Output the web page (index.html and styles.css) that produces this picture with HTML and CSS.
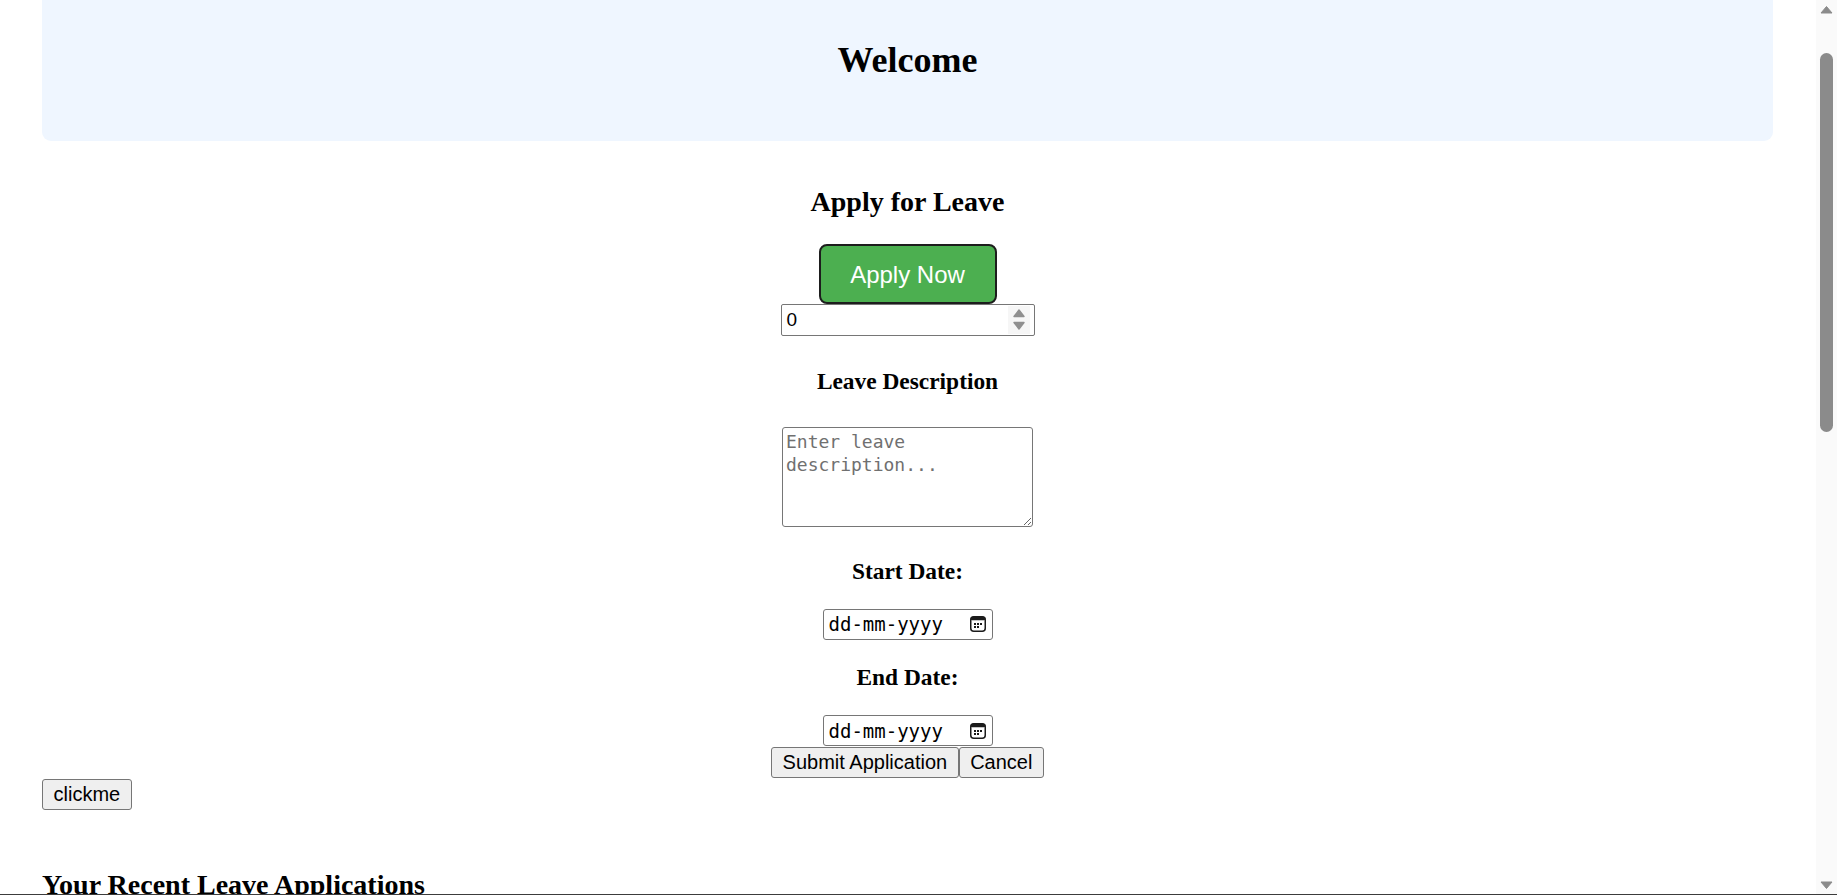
FILE: index.html
```html
<!DOCTYPE html>
<html lang="en">
<head>
<meta charset="utf-8">
<title>Leave Portal</title>
<link rel="stylesheet" href="styles.css">
</head>
<body>
<div class="page">
  <main class="content">
    <header class="welcome">
      <h1 class="welcome-title">Welcome</h1>
    </header>

    <section class="apply">
      <h2 class="apply-title">Apply for Leave</h2>
      <button class="apply-btn" type="button">Apply Now</button>
      <div class="number-field">
        <span class="number-value">0</span>
        <span class="spinner">
          <svg width="22" height="28" viewBox="0 0 22 28">
            <polygon points="6,10.5 11,4 16,10.5" fill="#8f8f8f" stroke="#8f8f8f" stroke-width="1.4" stroke-linejoin="round"/>
            <polygon points="6,16.5 11,23 16,16.5" fill="#8f8f8f" stroke="#8f8f8f" stroke-width="1.4" stroke-linejoin="round"/>
          </svg>
        </span>
      </div>

      <h3 class="field-label label-desc">Leave Description</h3>
      <textarea class="desc" placeholder="Enter leave description..."></textarea>

      <h3 class="field-label label-start">Start Date:</h3>
      <div class="date-field">
        <span class="date-text">dd-mm-yyyy</span>
        <svg class="cal" width="18" height="18" viewBox="0 0 18 18">
          <rect x="1.75" y="1.75" width="14.5" height="14.5" rx="3" fill="none" stroke="#1b1b1b" stroke-width="1.5"/>
          <rect x="1.75" y="1.75" width="14.5" height="3.6" rx="1.5" fill="#1b1b1b"/>
          <rect x="5" y="8" width="2" height="2" fill="#1b1b1b"/>
          <rect x="8" y="8" width="2" height="2" fill="#1b1b1b"/>
          <rect x="11" y="8" width="2" height="2" fill="#1b1b1b"/>
          <rect x="5" y="11" width="2" height="2" fill="#1b1b1b"/>
          <rect x="8" y="11" width="2" height="2" fill="#1b1b1b"/>
        </svg>
      </div>

      <h3 class="field-label label-end">End Date:</h3>
      <div class="date-field">
        <span class="date-text">dd-mm-yyyy</span>
        <svg class="cal" width="18" height="18" viewBox="0 0 18 18">
          <rect x="1.75" y="1.75" width="14.5" height="14.5" rx="3" fill="none" stroke="#1b1b1b" stroke-width="1.5"/>
          <rect x="1.75" y="1.75" width="14.5" height="3.6" rx="1.5" fill="#1b1b1b"/>
          <rect x="5" y="8" width="2" height="2" fill="#1b1b1b"/>
          <rect x="8" y="8" width="2" height="2" fill="#1b1b1b"/>
          <rect x="11" y="8" width="2" height="2" fill="#1b1b1b"/>
          <rect x="5" y="11" width="2" height="2" fill="#1b1b1b"/>
          <rect x="8" y="11" width="2" height="2" fill="#1b1b1b"/>
        </svg>
      </div>

      <div class="actions">
        <button class="btn" type="button">Submit Application</button><button class="btn" type="button">Cancel</button>
      </div>
    </section>

    <button class="btn clickme" type="button">clickme</button>

    <h2 class="recent-title">Your Recent Leave Applications</h2>
  </main>

  <div class="scrollbar">
    <div class="sb-arrow">
      <svg width="15" height="21" viewBox="0 0 15 21"><polygon points="2,13 7.5,6.5 13,13" fill="#8b8b8b" stroke="#8b8b8b" stroke-width="1" stroke-linejoin="round"/></svg>
    </div>
    <div class="sb-track"><div class="sb-thumb"></div></div>
    <div class="sb-arrow">
      <svg width="15" height="21" viewBox="0 0 15 21"><polygon points="2,8 7.5,14.5 13,8" fill="#8b8b8b" stroke="#8b8b8b" stroke-width="1" stroke-linejoin="round"/></svg>
    </div>
  </div>
</div>
<div class="bottom-line"></div>
</body>
</html>
```

FILE: styles.css
```css
html, body {
  margin: 0;
  padding: 0;
  height: 100%;
  overflow: hidden;
}

body {
  font-family: "Liberation Serif", "Times New Roman", serif;
  color: #000;
  background: #fff;
}

.page {
  display: flex;
  height: 895px;
}

.content {
  flex: 1;
  min-width: 0;
  padding: 0 43px 0 42px;
}

/* Header */
.welcome {
  height: 141px;
  box-sizing: border-box;
  padding-top: 40px;
  background: #eff6ff;
  border-radius: 0 0 9px 9px;
  text-align: center;
}

.welcome-title {
  margin: 0;
  font-size: 36px;
  line-height: 41px;
  font-weight: bold;
}

/* Form column */
.apply {
  display: flex;
  flex-direction: column;
  align-items: center;
}

.apply-title {
  margin: 45px 0 0;
  font-size: 28px;
  line-height: 32px;
}

.apply-btn {
  margin-top: 26px;
  box-sizing: border-box;
  width: 178px;
  height: 60px;
  padding: 2px 0 0;
  font-family: "Liberation Sans", Arial, sans-serif;
  font-size: 24px;
  color: #fff;
  background: #4caf50;
  border: 2px solid #1d1d1d;
  border-radius: 8px;
}

.number-field {
  box-sizing: border-box;
  width: 254px;
  height: 32px;
  display: flex;
  align-items: center;
  justify-content: space-between;
  padding: 0 4px 0 5px;
  border: 1px solid #767676;
  border-radius: 2px;
  font-family: "Liberation Sans", Arial, sans-serif;
  font-size: 19px;
}

.spinner {
  display: flex;
  background: #f6f6f6;
}

.spinner svg {
  display: block;
}

.field-label {
  margin: 0;
  font-size: 23.4px;
  line-height: 27px;
  font-weight: bold;
}

.label-desc {
  margin-top: 31.5px;
}

.desc {
  margin-top: 32.5px;
  box-sizing: border-box;
  width: 251px;
  height: 100px;
  padding: 2px 3px;
  border: 1px solid #767676;
  border-radius: 3px;
  font-family: "DejaVu Sans Mono", monospace;
  font-size: 18px;
  line-height: 23.4px;
}

.desc::placeholder {
  color: #707070;
}

.label-start {
  margin-top: 30.5px;
}

.label-end {
  margin-top: 24.7px;
}

.date-field {
  margin-top: 24px;
  box-sizing: border-box;
  width: 170px;
  height: 31px;
  display: flex;
  align-items: center;
  justify-content: space-between;
  padding: 0 5px 0 5px;
  border: 1px solid #767676;
  border-radius: 3px;
}

.date-text {
  font-family: "DejaVu Sans Mono", monospace;
  font-size: 19px;
  color: #000;
}

.cal {
  display: block;
}

.actions {
  display: flex;
  margin-top: 1px;
}

.btn {
  box-sizing: border-box;
  height: 31px;
  padding: 0 10.5px;
  font-family: "Liberation Sans", Arial, sans-serif;
  font-size: 20px;
  line-height: 23px;
  color: #000;
  background: #efefef;
  border: 1px solid #767676;
  border-radius: 3px;
}

.clickme {
  display: block;
  margin-top: 1px;
}

.recent-title {
  margin: 59px 0 0;
  font-size: 28px;
  line-height: 32px;
}

/* Window scrollbar */
.scrollbar {
  width: 21px;
  flex: none;
  display: flex;
  flex-direction: column;
  align-items: center;
  background: #fafafa;
}

.sb-arrow {
  height: 21px;
  display: flex;
  align-items: center;
  justify-content: center;
}

.sb-arrow svg {
  display: block;
}

.sb-track {
  flex: 1;
  padding-top: 32px;
}

.sb-thumb {
  width: 13px;
  height: 379px;
  border-radius: 7px;
  background: #8b8b8b;
}

.bottom-line {
  position: fixed;
  left: 0;
  right: 0;
  bottom: 0;
  height: 1px;
  background: #3c3c3c;
}
```
